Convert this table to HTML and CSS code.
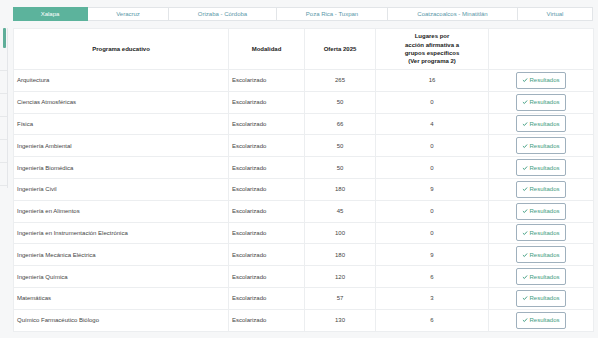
FILE: index.html
```html
<!DOCTYPE html>
<html lang="es">
<head>
    <meta charset="UTF-8">
    <meta name="viewport" content="width=device-width, initial-scale=1.0">
    <title>Oferta educativa 2025</title>
    <link rel="stylesheet" href="styles.css">
</head>
<body>
    <div class="side-strip">
        <div class="side-active"></div>
        <div class="side-item"></div>
        <div class="side-item"></div>
        <div class="side-item"></div>
        <div class="side-item"></div>
        <div class="side-item"></div>
        <div class="side-item"></div>
    </div>
    <div class="content">
        <div class="tabs">
            <div class="tab active w1">Xalapa</div>
            <div class="tab w2">Veracruz</div>
            <div class="tab w3">Orizaba - Córdoba</div>
            <div class="tab w4">Poza Rica - Tuxpan</div>
            <div class="tab w5">Coatzacoalcos - Minatitlán</div>
            <div class="tab w6">Virtual</div>
        </div>
        <table class="oferta">
            <thead>
                <tr>
                    <th class="c1">Programa educativo</th>
                    <th class="c2">Modalidad</th>
                    <th class="c3">Oferta 2025</th>
                    <th class="c4">Lugares por<br>acción afirmativa a<br>grupos específicos<br>(Ver programa 2)</th>
                    <th class="c5"></th>
                </tr>
            </thead>
            <tbody>
                <tr><td>Arquitectura</td><td>Escolarizado</td><td class="num">265</td><td class="num">16</td><td class="num"><button class="btn-res"><svg viewBox="0 0 10 10"><path d="M1.5 5.2 L4 7.5 L8.5 2.5"/></svg>Resultados</button></td></tr>
                <tr><td>Ciencias Atmosféricas</td><td>Escolarizado</td><td class="num">50</td><td class="num">0</td><td class="num"><button class="btn-res"><svg viewBox="0 0 10 10"><path d="M1.5 5.2 L4 7.5 L8.5 2.5"/></svg>Resultados</button></td></tr>
                <tr><td>Física</td><td>Escolarizado</td><td class="num">66</td><td class="num">4</td><td class="num"><button class="btn-res"><svg viewBox="0 0 10 10"><path d="M1.5 5.2 L4 7.5 L8.5 2.5"/></svg>Resultados</button></td></tr>
                <tr><td>Ingeniería Ambiental</td><td>Escolarizado</td><td class="num">50</td><td class="num">0</td><td class="num"><button class="btn-res"><svg viewBox="0 0 10 10"><path d="M1.5 5.2 L4 7.5 L8.5 2.5"/></svg>Resultados</button></td></tr>
                <tr><td>Ingeniería Biomédica</td><td>Escolarizado</td><td class="num">50</td><td class="num">0</td><td class="num"><button class="btn-res"><svg viewBox="0 0 10 10"><path d="M1.5 5.2 L4 7.5 L8.5 2.5"/></svg>Resultados</button></td></tr>
                <tr><td>Ingeniería Civil</td><td>Escolarizado</td><td class="num">180</td><td class="num">9</td><td class="num"><button class="btn-res"><svg viewBox="0 0 10 10"><path d="M1.5 5.2 L4 7.5 L8.5 2.5"/></svg>Resultados</button></td></tr>
                <tr><td>Ingeniería en Alimentos</td><td>Escolarizado</td><td class="num">45</td><td class="num">0</td><td class="num"><button class="btn-res"><svg viewBox="0 0 10 10"><path d="M1.5 5.2 L4 7.5 L8.5 2.5"/></svg>Resultados</button></td></tr>
                <tr><td>Ingeniería en Instrumentación Electrónica</td><td>Escolarizado</td><td class="num">100</td><td class="num">0</td><td class="num"><button class="btn-res"><svg viewBox="0 0 10 10"><path d="M1.5 5.2 L4 7.5 L8.5 2.5"/></svg>Resultados</button></td></tr>
                <tr><td>Ingeniería Mecánica Eléctrica</td><td>Escolarizado</td><td class="num">180</td><td class="num">9</td><td class="num"><button class="btn-res"><svg viewBox="0 0 10 10"><path d="M1.5 5.2 L4 7.5 L8.5 2.5"/></svg>Resultados</button></td></tr>
                <tr><td>Ingeniería Química</td><td>Escolarizado</td><td class="num">120</td><td class="num">6</td><td class="num"><button class="btn-res"><svg viewBox="0 0 10 10"><path d="M1.5 5.2 L4 7.5 L8.5 2.5"/></svg>Resultados</button></td></tr>
                <tr><td>Matemáticas</td><td>Escolarizado</td><td class="num">57</td><td class="num">3</td><td class="num"><button class="btn-res"><svg viewBox="0 0 10 10"><path d="M1.5 5.2 L4 7.5 L8.5 2.5"/></svg>Resultados</button></td></tr>
                <tr><td>Químico Farmacéutico Biólogo</td><td>Escolarizado</td><td class="num">130</td><td class="num">6</td><td class="num"><button class="btn-res"><svg viewBox="0 0 10 10"><path d="M1.5 5.2 L4 7.5 L8.5 2.5"/></svg>Resultados</button></td></tr>
            </tbody>
        </table>
    </div>
</body>
</html>
```

FILE: styles.css
```css
body {
    margin: 0;
    background-color: #f6f7f8;
    font-family: "Liberation Sans", Arial, sans-serif;
    color: #333;
    display: flex;
}
.side-strip {
    width: 7px;
    margin-top: 28px;
    height: 160px;
    border-right: 1px solid #e4e6e9;
    flex-shrink: 0;
}
.side-active {
    width: 3px;
    height: 20px;
    margin-left: 3px;
    background-color: #5fae99;
    border-radius: 1px;
}
.side-item {
    height: 22px;
    border-bottom: 1px solid #e6e8ea;
}
.content {
    padding: 7px 0 0 5px;
}
.tabs {
    display: flex;
    height: 14px;
}
.tab {
    box-sizing: border-box;
    height: 14px;
    line-height: 12px;
    font-size: 6px;
    text-align: center;
    background-color: #fff;
    color: #5a97a8;
    border: 1px solid #e2e5e8;
    border-left: none;
}
.tab.active {
    background-color: #5cb39c;
    border-color: #5cb39c;
    color: #fff;
}
.w1 { width: 75px; }
.w2 { width: 81px; }
.w3 { width: 108px; }
.w4 { width: 111px; }
.w5 { width: 130px; }
.w6 { width: 75px; }
.oferta {
    margin-top: 7px;
    width: 580px;
    border-collapse: collapse;
    background-color: #fff;
    font-size: 6px;
    table-layout: fixed;
}
.oferta th, .oferta td {
    box-sizing: border-box;
    border: 1px solid #eceef0;
    padding: 0 3px;
    vertical-align: middle;
}
.oferta th {
    height: 41px;
    font-weight: bold;
    text-align: center;
    line-height: 8.3px;
    color: #222;
}
.oferta td {
    height: 21.8px;
    color: #444;
}
.oferta td.num {
    text-align: center;
}
.c1 { width: 215px; }
.c2 { width: 76px; }
.c3 { width: 71px; }
.c4 { width: 113px; }
.c5 { width: 105px; }
.btn-res {
    box-sizing: border-box;
    width: 50px;
    height: 17px;
    padding: 0;
    font-family: "Liberation Sans", Arial, sans-serif;
    font-size: 6px;
    color: #3f9c80;
    background-color: #fff;
    border: 1px solid #9fb0bd;
    border-radius: 2px;
    display: inline-flex;
    align-items: center;
    justify-content: center;
    gap: 1px;
    vertical-align: middle;
}
.btn-res svg {
    width: 6px;
    height: 6px;
    fill: none;
    stroke: #3f9c80;
    stroke-width: 1.6;
}
```
